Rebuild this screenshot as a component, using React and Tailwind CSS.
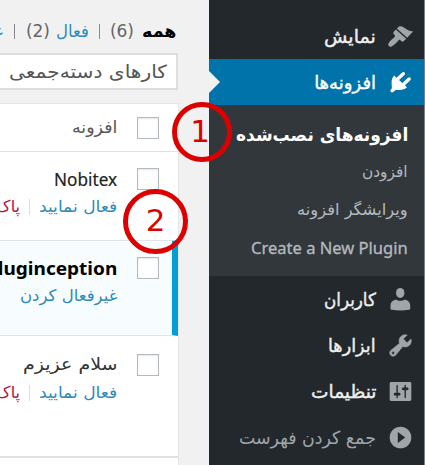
import { useLayoutEffect, useRef, useState } from "react";

// Text run stretched horizontally to a fixed width.
function Fit({ w, className = "", ltr = false, children }) {
  const ref = useRef(null);
  const [scale, setScale] = useState(1);
  useLayoutEffect(() => {
    setScale(w / ref.current.offsetWidth);
  }, [w]);
  return (
    <span className={`flex shrink-0 justify-start whitespace-nowrap ${className}`} style={{ width: w }}>
      <span
        ref={ref}
        dir={ltr ? "ltr" : "rtl"}
        className="block shrink-0 origin-right"
        style={{ transform: `scaleX(${scale})` }}
      >
        {children}
      </span>
    </span>
  );
}

const ICONS = {
  appearance: (
    <>
      <path d="M7.3 4.1L8.7 2.7C9.8 2 11.6 2.6 12.8 3.5C14.6 5 16.6 5.9 19.3 6.3L14.9 10.9Z" />
      <path d="M6.6 4.8L14.2 11.6L12.3 13.5C11.8 14 11.2 13.9 10.8 13.5L9.9 12.7C9.3 12.3 8.9 12.5 8.4 13C7 14.6 5.2 16.6 3.4 17.4C2.1 18 .5 16.8 1 15.3C1.6 13.4 4 11.8 5.4 10.5C6 9.9 6.1 9.5 5.7 9L5 8.1C4.6 7.6 4.6 7 5 6.5Z" />
    </>
  ),
  plugins: (
    <>
      <path d="M5.3 4.9L14.8 13.6C13.4 15 11.2 15.7 9 15.6L6.4 15.5L4.8 16.9C4.2 17.5 3.4 17.5 2.9 17C2.4 16.5 2.4 15.7 2.9 15.2L3.6 14.3L3.4 10C3.4 8 4 6.2 5.3 4.9Z" />
      <path d="M8.3 7L12.1 3.5M12.7 10.9L16.4 7.4" fill="none" stroke="currentColor" strokeWidth="2.5" strokeLinecap="round" />
    </>
  ),
  users: (
    <>
      <ellipse cx="9.8" cy="5.1" rx="3.1" ry="3.7" />
      <path d="M7 10.1C8.8 11.3 10.9 11.3 12.7 10.1C15.5 10.1 17.2 12 17.2 14.5V16.6C17.2 17.2 16.8 17.5 16.2 17.6C12.4 18.3 7.4 18.3 3.6 17.6C3 17.5 2.6 17.2 2.6 16.6V14.5C2.6 12 4.3 10.1 7 10.1Z" />
    </>
  ),
  tools: (
    <path
      fillRule="evenodd"
      stroke="currentColor"
      strokeWidth="0.4"
      d="M16.68 9.77c-1.34 1.34-3.3 1.67-4.95.99l-5.41 6.52c-.99.99-2.59.99-3.58 0s-.99-2.59 0-3.57l6.52-5.42c-.68-1.65-.35-3.61.99-4.95 1.28-1.28 3.12-1.62 4.72-1.06l-2.89 2.89 2.82 2.82 2.86-2.87c.53 1.58.18 3.39-1.08 4.65zM3.81 16.21c.4.39 1.04.39 1.43 0 .4-.4.4-1.04 0-1.43-.39-.4-1.03-.4-1.43 0-.39.39-.39 1.03 0 1.43z"
    />
  ),
  settings: (
    <path
      fillRule="evenodd"
      d="M18 16V4c0-.55-.45-1-1-1H3c-.55 0-1 .45-1 1v12c0 .55.45 1 1 1h14c.55 0 1-.45 1-1zM8 11h1c.55 0 1 .45 1 1s-.45 1-1 1H8v1.5c0 .28-.22.5-.5.5s-.5-.22-.5-.5V13H6c-.55 0-1-.45-1-1s.45-1 1-1h1V5.5c0-.28.22-.5.5-.5s.5.22.5.5V11zm5-2h-1c-.55 0-1-.45-1-1s.45-1 1-1h1V5.5c0-.28.22-.5.5-.5s.5.22.5.5V7h1c.55 0 1 .45 1 1s-.45 1-1 1h-1v5.5c0 .28-.22.5-.5.5s-.5-.22-.5-.5V9z"
    />
  ),
  collapse: <path fillRule="evenodd" d="M10 2a8 8 0 1 0 0 16 8 8 0 0 0 0-16zM8 6l5.5 4L8 14z" />,
};

function MenuItem({ icon, w, children, className = "text-[#eeeeee]", iconClass = "text-[#a0a5aa]", weight = "[-webkit-text-stroke:0.4px]" }) {
  return (
    <div className={`relative flex h-[46px] shrink-0 items-center pr-[10px] text-[18px] ${className}`}>
      <svg viewBox="0 0 20 20" className={`ml-[11px] size-[27px] shrink-0 fill-current ${iconClass}`}>
        {ICONS[icon]}
      </svg>
      <Fit w={w} className={weight}>{children}</Fit>
      {icon === "plugins" && (
        <span className="absolute left-0 top-[12px] size-0 border-y-[11px] border-l-[11px] border-y-transparent border-l-[#f1f1f1]" />
      )}
    </div>
  );
}

function Checkbox() {
  return <span className="size-[22px] shrink-0 border border-[#b4b9be] bg-white shadow-[inset_0_1px_2px_rgba(0,0,0,0.1)]" />;
}

function RowLinks() {
  return (
    <div className="flex h-[26px] items-center text-[16px] text-[#2e8ab8]">
      <Fit w={78}>فعال نمایید</Fit>
      <span className="mx-[9px] h-[16px] w-px shrink-0 bg-[#dddddd]" />
      <span className="whitespace-nowrap text-[#b5123e]">پاک کردن</span>
    </div>
  );
}

function Badge({ className, children }) {
  return (
    <span
      dir="ltr"
      className={`absolute flex items-center justify-center rounded-full border-[5px] border-[#dc0000] leading-none text-[#dc0000] ${className}`}
    >
      {children}
    </span>
  );
}

export default function App() {
  return (
    <div
      dir="rtl"
      className="relative flex h-[465px] w-[425px] overflow-hidden bg-[#f1f1f1] font-['DejaVu_Sans',sans-serif]"
    >
      <aside className="flex w-[216px] shrink-0 flex-col border-r border-[#7c8084] bg-[#23282d] pt-[13px]">
        <MenuItem icon="appearance" w={52}>نمایش</MenuItem>
        <MenuItem icon="plugins" w={62} className="bg-[#0073aa] text-white" iconClass="text-white">افزونه‌ها</MenuItem>
        <div className="flex h-[171px] shrink-0 flex-col bg-[#32373c] pr-[16px] pt-[10px] text-[16px] text-[#b4b9be]">
          <div className="flex h-[38px] items-center text-[18px] font-bold text-white">
            <Fit w={172}>افزونه‌های نصب‌شده</Fit>
          </div>
          <div className="flex h-[38px] items-center"><Fit w={46}>افزودن</Fit></div>
          <div className="flex h-[38px] items-center"><Fit w={111}>ویرایشگر افزونه</Fit></div>
          <div className="flex h-[38px] items-center font-['Noto_Sans',sans-serif] [-webkit-text-stroke:0.3px]">
            <Fit w={157} ltr>Create a New Plugin</Fit>
          </div>
        </div>
        <MenuItem icon="users" w={52}>کاربران</MenuItem>
        <MenuItem icon="tools" w={48}>ابزارها</MenuItem>
        <MenuItem icon="settings" w={65}>تنظیمات</MenuItem>
        <MenuItem icon="collapse" w={137} className="text-[#a0a5aa]" weight="">جمع کردن فهرست</MenuItem>
      </aside>

      <main className="flex w-[209px] shrink-0 flex-col overflow-hidden">
        <div className="flex h-[53px] shrink-0 items-center pr-[33px] pt-[10px] text-[17px] text-[#666666]">
          <Fit w={35} className="font-bold text-black">همه</Fit>
          <span className="w-[7px] shrink-0" />
          <Fit w={24}>(6)</Fit>
          <span className="mx-[10px] h-[15px] w-px shrink-0 bg-[#888888]" />
          <Fit w={33} className="text-[#2e8ab8]">فعال</Fit>
          <span className="w-[6px] shrink-0" />
          <Fit w={24}>(2)</Fit>
          <span className="mx-[11px] h-[15px] w-px shrink-0 bg-[#888888]" />
          <span className="whitespace-nowrap text-[#2e8ab8]">غیرفعال</span>
        </div>
        <div className="mr-[31px] flex h-[37px] shrink-0 items-center border-2 border-l-0 border-[#dddddd] bg-white pr-[9px] text-[18px] text-[#555555]">
          <Fit w={158}>کارهای دسته‌جمعی</Fit>
        </div>
        <div className="mr-[30px] mt-[13px] flex grow flex-col border-r border-t border-[#e5e5e5] bg-white">
          <div className="flex h-[48px] shrink-0 items-center border-b border-[#e1e1e1] pr-[19px] text-[17px] text-[#555555]">
            <Checkbox />
            <span className="w-[20px] shrink-0" />
            <Fit w={45}>افزونه</Fit>
          </div>
          <div className="flex h-[88px] shrink-0 pr-[19px] pt-[16px]">
            <Checkbox />
            <div className="mr-[20px]">
              <div className="flex h-[22px] items-center font-['Noto_Sans',sans-serif] text-[18px] text-[#222222] [-webkit-text-stroke:0.2px]">
                <Fit w={63} ltr>Nobitex</Fit>
              </div>
              <div className="mt-[4px]"><RowLinks /></div>
            </div>
          </div>
          <div className="flex h-[96px] shrink-0 border-y border-r-[6px] border-y-[#e1e5e8] border-r-[#00a0d2] bg-[#f7fcfe] pr-[13px] pt-[16px]">
            <Checkbox />
            <div className="mr-[20px]">
              <div className="flex h-[22px] items-center font-['Noto_Sans',sans-serif] text-[18px] font-bold text-black">
                <Fit w={131} ltr>Pluginception</Fit>
              </div>
              <div className="mt-[4px] flex h-[26px] items-center text-[16px] text-[#2e8ab8]">
                <Fit w={97}>غیرفعال کردن</Fit>
              </div>
            </div>
          </div>
          <div className="flex h-[122px] shrink-0 border-b-2 border-[#e1e1e1] pr-[19px] pt-[18px]">
            <Checkbox />
            <div className="mr-[20px]">
              <div className="flex h-[22px] items-center text-[17px] text-[#333333]">
                <Fit w={94}>سلام عزیزم</Fit>
              </div>
              <div className="mt-[4px]"><RowLinks /></div>
            </div>
          </div>
        </div>
      </main>

      <Badge className="left-[172px] top-[102px] size-[60px] pr-[4px] pb-[2px] text-[31px]">1</Badge>
      <Badge className="left-[123px] top-[189px] size-[65px] pb-[3px] text-[31px]">2</Badge>
    </div>
  );
}
